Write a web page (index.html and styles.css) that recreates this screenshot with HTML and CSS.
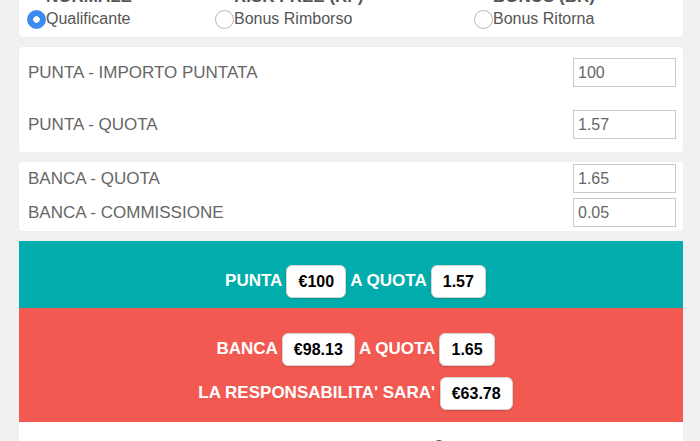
FILE: index.html
```html
<!DOCTYPE html>
<html lang="it">
<head>
    <meta charset="UTF-8">
    <meta name="viewport" content="width=device-width, initial-scale=1.0">
    <title>Calcolatore Matched Betting</title>
    <link rel="stylesheet" href="styles.css">
</head>
<body>

    <div class="calculator">

        <!-- Tipo di scommessa -->
        <div class="card bet-type">
            <div class="bet-col col-normal">
                <h3>NORMALE</h3>
                <label class="radio-label"><input type="radio" name="mode" value="qualificante" checked>Qualificante</label>
            </div>
            <div class="bet-col col-rf">
                <h3>RISK FREE (RF)</h3>
                <label class="radio-label"><input type="radio" name="mode" value="rimborso">Bonus Rimborso</label>
            </div>
            <div class="bet-col col-br">
                <h3>BONUS (BR)</h3>
                <label class="radio-label"><input type="radio" name="mode" value="ritorna">Bonus Ritorna</label>
            </div>
        </div>

        <!-- Punta -->
        <div class="card fields fields-punta">
            <div class="field-row">
                <label for="puntaImporto">PUNTA - IMPORTO PUNTATA</label>
                <input type="text" id="puntaImporto" value="100">
            </div>
            <div class="field-row">
                <label for="puntaQuota">PUNTA - QUOTA</label>
                <input type="text" id="puntaQuota" value="1.57">
            </div>
        </div>

        <!-- Banca -->
        <div class="card fields fields-banca">
            <div class="field-row">
                <label for="bancaQuota">BANCA - QUOTA</label>
                <input type="text" id="bancaQuota" value="1.65">
            </div>
            <div class="field-row">
                <label for="bancaCommissione">BANCA - COMMISSIONE</label>
                <input type="text" id="bancaCommissione" value="0.05">
            </div>
        </div>

        <!-- Risultati -->
        <div class="results">
            <div class="result-box result-punta">
                <div class="result-line">PUNTA <span class="pill">€100</span> A QUOTA <span class="pill">1.57</span></div>
            </div>
            <div class="result-box result-banca">
                <div class="result-line">BANCA <span class="pill">€98.13</span> A QUOTA <span class="pill">1.65</span></div>
                <div class="result-line">LA RESPONSABILITA' SARA' <span class="pill">€63.78</span></div>
            </div>
            <div class="result-footer">
                <span class="info-dot"></span>
            </div>
        </div>

    </div>

</body>
</html>
```

FILE: styles.css
```css
/* General Body Styles */
body {
    font-family: "Liberation Sans", Arial, Helvetica, sans-serif;
    background-color: #f0f1f0;
    margin: 0;
    overflow: hidden;
}

/* Page column (page is scrolled a bit, the top card is cut) */
.calculator {
    margin: -19px 17px 0 19px;
}

.card {
    background-color: #ffffff;
    border-radius: 3px;
    margin-bottom: 10px;
    box-shadow: 0 0 1px rgba(0, 0, 0, 0.08);
}

/* Bet type radios */
.bet-type {
    display: grid;
    grid-template-columns: 188px 259px 1fr;
    padding: 6px 0 8px 8px;
}

.bet-col h3 {
    margin: 0 0 2px 19px;
    font-size: 17px;
    line-height: 20px;
    color: #555;
}

.radio-label {
    display: flex;
    align-items: center;
    font-size: 16px;
    line-height: 20px;
    color: #555;
}

.radio-label input {
    appearance: none;
    -webkit-appearance: none;
    width: 19px;
    height: 19px;
    margin: 0;
    border: 1px solid #b8b8b8;
    border-radius: 50%;
    background: #fff;
    box-sizing: border-box;
    flex-shrink: 0;
}

.radio-label input:checked {
    border-color: #3a8cf0;
    background: radial-gradient(circle, #fff 0 3px, #3a8cf0 3.5px);
}

/* Input rows */
.fields {
    padding-left: 9px;
    padding-right: 7px;
}

.fields-punta {
    padding-top: 11px;
    padding-bottom: 13px;
}

.fields-banca {
    padding-top: 2px;
    padding-bottom: 4px;
}

.field-row {
    display: flex;
    justify-content: space-between;
    align-items: center;
}

.fields-punta .field-row + .field-row {
    margin-top: 23px;
}

.fields-banca .field-row + .field-row {
    margin-top: 5px;
}

.field-row label {
    font-size: 17px;
    color: #666;
}

.field-row input {
    width: 103px;
    height: 29px;
    box-sizing: border-box;
    border: 1px solid #c9c9c9;
    border-radius: 0;
    padding: 0 4px;
    font-family: inherit;
    font-size: 16px;
    color: #666;
}

/* Results */
.results {
    background-color: #ffffff;
}

.result-box {
    text-align: center;
    padding-left: 9px;
    color: #ffffff;
    font-weight: bold;
    font-size: 17px;
}

.result-punta {
    background-color: #00adac;
    padding-top: 24px;
    padding-bottom: 10px;
}

.result-banca {
    background-color: #f25951;
    padding-top: 25px;
    padding-bottom: 12px;
}

.result-line {
    line-height: 32px;
}

.result-line + .result-line {
    margin-top: 11px;
}

.pill {
    display: inline-block;
    background-color: #ffffff;
    color: #000;
    border: 1px solid #d6d6d6;
    border-radius: 6px;
    padding: 0 11px;
    font-size: 16px;
    line-height: 31px;
    vertical-align: middle;
    box-shadow: 0 1px 2px rgba(0, 0, 0, 0.15);
}

.result-footer {
    height: 40px;
    padding-left: 414px;
    padding-top: 16px;
    box-sizing: border-box;
}

.info-dot {
    display: inline-block;
    width: 12px;
    height: 12px;
    border-radius: 50%;
    background-color: #4a4f55;
}
```
